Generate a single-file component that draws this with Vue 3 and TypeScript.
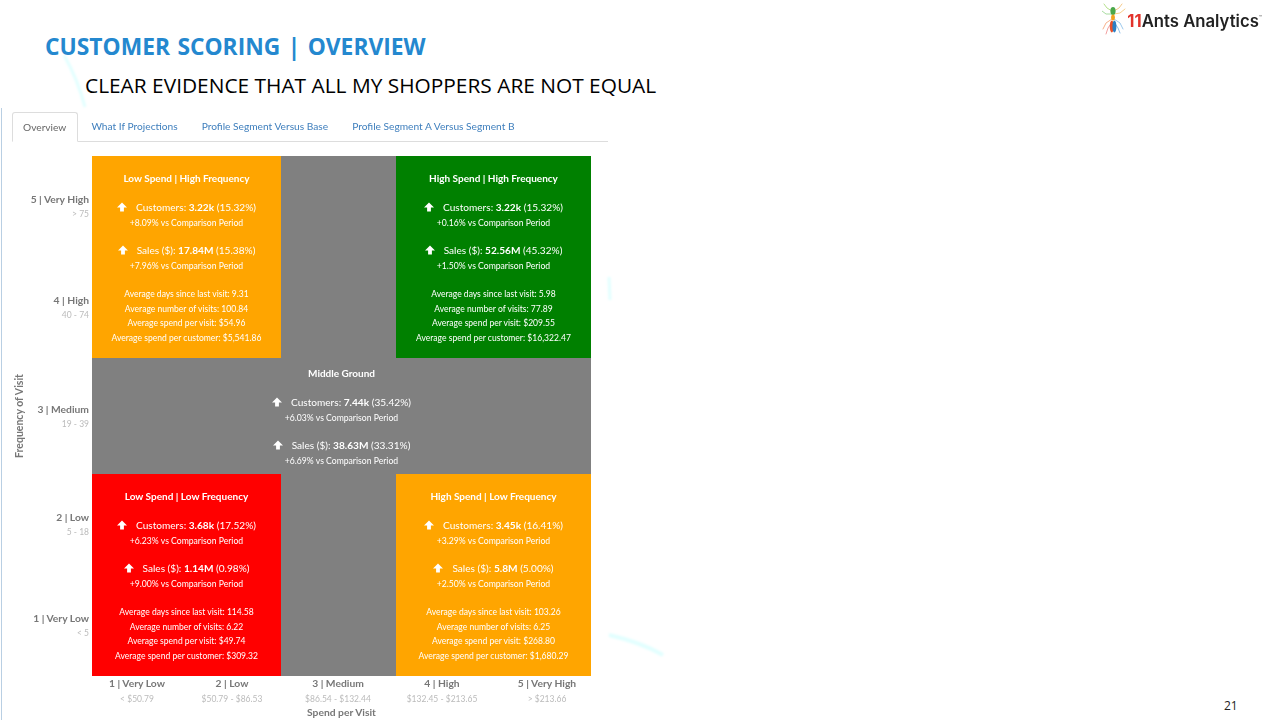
<script setup lang="ts">
interface Metric {
  label: string;
  value: string;
  share: string;
  delta: string;
}

interface Segment {
  key: string;
  title: string;
  color: string;
  customers: Metric;
  sales: Metric;
  averages: string[];
}

const tabs = ["Overview", "What If Projections", "Profile Segment Versus Base", "Profile Segment A Versus Segment B"];

const freqLabels = [
  { name: "5 | Very High", range: "> 75", h: 101 },
  { name: "4 | High", range: "40 - 74", h: 109 },
  { name: "3 | Medium", range: "19 - 39", h: 108 },
  { name: "2 | Low", range: "5 - 18", h: 101 },
  { name: "1 | Very Low", range: "< 5", h: 65 },
];

const spendLabels = [
  { name: "1 | Very Low", range: "< $50.79" },
  { name: "2 | Low", range: "$50.79 - $86.53" },
  { name: "3 | Medium", range: "$86.54 - $132.44" },
  { name: "4 | High", range: "$132.45 - $213.65" },
  { name: "5 | Very High", range: "> $213.66" },
];

function metric(label: string, value: string, share: string, delta: string): Metric {
  return { label, value, share, delta: `+${delta}% vs Comparison Period` };
}

function avgs(days: string, visits: string, spend: string, perCustomer: string): string[] {
  return [
    `Average days since last visit: ${days}`,
    `Average number of visits: ${visits}`,
    `Average spend per visit: $${spend}`,
    `Average spend per customer: $${perCustomer}`,
  ];
}

const segments: Segment[] = [
  {
    key: "tl",
    title: "Low Spend | High Frequency",
    color: "#ffa500",
    customers: metric("Customers:", "3.22k", "(15.32%)", "8.09"),
    sales: metric("Sales ($):", "17.84M", "(15.38%)", "7.96"),
    averages: avgs("9.31", "100.84", "54.96", "5,541.86"),
  },
  {
    key: "tr",
    title: "High Spend | High Frequency",
    color: "#008000",
    customers: metric("Customers:", "3.22k", "(15.32%)", "0.16"),
    sales: metric("Sales ($):", "52.56M", "(45.32%)", "1.50"),
    averages: avgs("5.98", "77.89", "209.55", "16,322.47"),
  },
  {
    key: "mid",
    title: "Middle Ground",
    color: "#808080",
    customers: metric("Customers:", "7.44k", "(35.42%)", "6.03"),
    sales: metric("Sales ($):", "38.63M", "(33.31%)", "6.69"),
    averages: [],
  },
  {
    key: "bl",
    title: "Low Spend | Low Frequency",
    color: "#ff0000",
    customers: metric("Customers:", "3.68k", "(17.52%)", "6.23"),
    sales: metric("Sales ($):", "1.14M", "(0.98%)", "9.00"),
    averages: avgs("114.58", "6.22", "49.74", "309.32"),
  },
  {
    key: "br",
    title: "High Spend | Low Frequency",
    color: "#ffa500",
    customers: metric("Customers:", "3.45k", "(16.41%)", "3.29"),
    sales: metric("Sales ($):", "5.8M", "(5.00%)", "2.50"),
    averages: avgs("103.26", "6.25", "268.80", "1,680.29"),
  },
];
</script>

<template>
  <div class="slide">
    <svg class="swoosh" width="1280" height="720" viewBox="0 0 1280 720" aria-hidden="true">
      <path d="M64 55 Q78 80 85 107" fill="none" stroke="#e2ffff" stroke-width="3" />
      <path d="M609 277 L610 300" fill="none" stroke="#e2ffff" stroke-width="3" />
      <path d="M609 635 Q640 642 663 655" fill="none" stroke="#e2ffff" stroke-width="4" />
    </svg>

    <header class="top">
      <div class="titles">
        <h1>CUSTOMER SCORING | OVERVIEW</h1>
        <h2>CLEAR EVIDENCE THAT ALL MY SHOPPERS ARE NOT EQUAL</h2>
      </div>
      <div class="logo">
        <svg width="24" height="32" viewBox="0 0 24 32" aria-hidden="true">
          <g fill="none" stroke-width="1" stroke-linecap="round">
            <path d="M10 8 L5 5 L2 1" stroke="#b5e08c" />
            <path d="M10 11 L4 11 L0 8" stroke="#a8dca0" />
            <path d="M10 16 L4 20 L1 26" stroke="#f7b08a" />
            <path d="M10 19 L6 25 L4 31" stroke="#f2a0a0" />
            <path d="M12 8 L17 5 L20 1" stroke="#f5c98a" />
            <path d="M12 11 L18 10 L23 6" stroke="#f7d08c" />
            <path d="M12 16 L18 20 L21 26" stroke="#9cc9ec" />
            <path d="M12 19 L16 25 L18 30" stroke="#8fc1ea" />
          </g>
          <ellipse cx="11" cy="8" rx="2.6" ry="4" fill="#4aa84a" />
          <ellipse cx="11" cy="14.5" rx="1.9" ry="3" fill="#f2a31f" />
          <ellipse cx="9.8" cy="23.5" rx="2" ry="6" fill="#e8502a" />
          <ellipse cx="12.4" cy="23.5" rx="2" ry="6" fill="#2b7fc4" />
        </svg>
        <span class="brand"><b>11</b>Ants Analytics<sup>™</sup></span>
      </div>
    </header>

    <div class="content">
      <section class="dash">
        <nav class="tabs">
          <a v-for="(t, i) in tabs" :key="t" class="tab" :class="{ active: i === 0 }">{{ t }}</a>
        </nav>

        <div class="chart">
          <div class="axis-y">Frequency of Visit</div>
          <div class="freq">
            <div v-for="f in freqLabels" :key="f.name" class="freq-row" :style="{ height: f.h + 'px' }">
              <strong>{{ f.name }}</strong>
              <small>{{ f.range }}</small>
            </div>
          </div>

          <div class="matrix">
            <div
              v-for="s in segments"
              :key="s.key"
              class="cell"
              :class="s.key"
              :style="{ background: s.color }"
            >
              <div class="cell-title">{{ s.title }}</div>
              <div v-for="m in [s.customers, s.sales]" :key="m.label" class="metric">
                <div class="metric-line">
                  <svg class="up" width="10" height="10" viewBox="0 0 10 10" aria-hidden="true">
                    <path d="M5 .4 L10 5.4 H6.9 V9.6 H3.1 V5.4 H0 Z" fill="#fff" />
                  </svg>
                  <span>{{ m.label }} <b>{{ m.value }}</b> {{ m.share }}</span>
                </div>
                <div class="delta">{{ m.delta }}</div>
              </div>
              <div v-if="s.averages.length" class="avgs">
                <div v-for="a in s.averages" :key="a">{{ a }}</div>
              </div>
            </div>
          </div>
        </div>

        <div class="spend">
          <div v-for="l in spendLabels" :key="l.name" class="spend-col">
            <strong>{{ l.name }}</strong>
            <small>{{ l.range }}</small>
          </div>
        </div>
        <div class="axis-x">Spend per Visit</div>
      </section>

      <div class="page-no">21</div>
    </div>
  </div>
</template>

<style>
html,
body {
  margin: 0;
  background: #fff;
  overflow: hidden;
}
</style>

<style scoped>
.slide {
  position: relative;
  width: 1280px;
  height: 720px;
  overflow: hidden;
  background: #fff;
}

.swoosh {
  position: absolute;
  left: 0;
  top: 0;
  filter: blur(0.8px);
}

.top {
  position: relative;
  display: flex;
  justify-content: space-between;
  height: 108px;
  box-sizing: border-box;
}

.titles {
  padding: 31px 0 0 45px;
}

h1 {
  margin: 0;
  font: 700 22.8px/32px "Open Sans", sans-serif;
  word-spacing: 1.5px;
  color: #2488cf;
}

h2 {
  margin: 6px 0 0 40px;
  font: 400 20.87px/32px "Open Sans", sans-serif;
  color: #000;
}

.logo {
  display: flex;
  align-items: center;
  gap: 1px;
  height: 32px;
  padding: 3px 18px 0 0;
  filter: blur(0.4px);
}

.brand {
  font: 600 16.7px/20px Inter, sans-serif;
  color: #222;
}

.brand b {
  font-weight: 700;
  color: #e2332b;
}

.brand sup {
  font-size: 5px;
  color: #777;
  vertical-align: 8px;
}

.content {
  position: relative;
  display: flex;
  height: 612px;
}

.dash {
  box-sizing: border-box;
  width: 607px;
  height: 612px;
  border-left: 1px solid #b9cfe3;
  margin-left: 1px;
  padding: 4px 0 0 10px;
  font-family: Lato, sans-serif;
  filter: blur(0.35px);
}

.tabs {
  display: flex;
  height: 29px;
  border-bottom: 1px solid #ddd;
}

.tab {
  padding: 0 12px;
  font-size: 10.2px;
  line-height: 29px;
  color: #3f7fbd;
}

.tab.active {
  box-sizing: border-box;
  height: 30px;
  padding: 0 11px 0 10px;
  margin-right: 1px;
  border: 1px solid #ddd;
  border-bottom-color: #fff;
  border-radius: 3px 3px 0 0;
  color: #666;
}

.chart {
  display: flex;
  margin-top: 14px;
}

.axis-y {
  width: 14px;
  align-self: center;
  writing-mode: vertical-rl;
  transform: rotate(180deg);
  text-align: center;
  font-size: 10.5px;
  font-weight: 700;
  line-height: 14px;
  color: #777;
}

.freq {
  box-sizing: border-box;
  width: 66px;
  padding: 36px 3px 0 0;
  text-align: right;
}

.freq-row,
.spend-col {
  display: flex;
  flex-direction: column;
}

.freq-row strong,
.spend-col strong {
  font-size: 10.3px;
  line-height: 15px;
  font-weight: 700;
  color: #777;
}

.freq-row small,
.spend-col small {
  font-size: 8.5px;
  line-height: 15px;
  color: #bbb;
}

.spend-col small {
  margin-top: 1px;
}

.matrix {
  display: grid;
  grid-template-columns: 189px 115px 195px;
  grid-template-rows: 202px 116px 202px;
  grid-template-areas:
    "tl . tr"
    "mid mid mid"
    "bl . br";
  width: 499px;
  background: #808080;
  color: #fff;
}

.cell {
  display: flex;
  flex-direction: column;
  align-items: center;
  padding-top: 14px;
  box-sizing: border-box;
  text-align: center;
}

.tl { grid-area: tl; }
.tr { grid-area: tr; }
.mid { grid-area: mid; padding-top: 7px; }
.bl { grid-area: bl; }
.br { grid-area: br; }

.cell-title {
  height: 16px;
  margin-bottom: 13px;
  font-size: 10px;
  line-height: 16px;
  font-weight: 700;
}

.metric {
  height: 30px;
  margin-bottom: 13px;
}

.metric-line {
  display: flex;
  align-items: center;
  justify-content: center;
  gap: 9px;
  height: 16px;
  font-size: 10.1px;
  line-height: 16px;
  white-space: nowrap;
}

.up {
  flex: none;
}

.delta {
  height: 13px;
  margin-top: 1px;
  font-size: 8.65px;
  line-height: 14px;
}

.avgs {
  margin-top: 2px;
  font-size: 8.55px;
  line-height: 14.6px;
}

.spend {
  display: grid;
  grid-template-columns: 90px 100px 112px 96px 114px;
  margin: 0 0 0 80px;
  text-align: center;
}

.axis-x {
  width: 499px;
  margin: -2px 0 0 80px;
  text-align: center;
  font-size: 10.3px;
  font-weight: 700;
  line-height: 14px;
  color: #777;
}

.page-no {
  align-self: flex-end;
  margin: 0 0 6px 616px;
  font: 400 12px/16px "Open Sans", sans-serif;
  color: #222;
}
</style>
